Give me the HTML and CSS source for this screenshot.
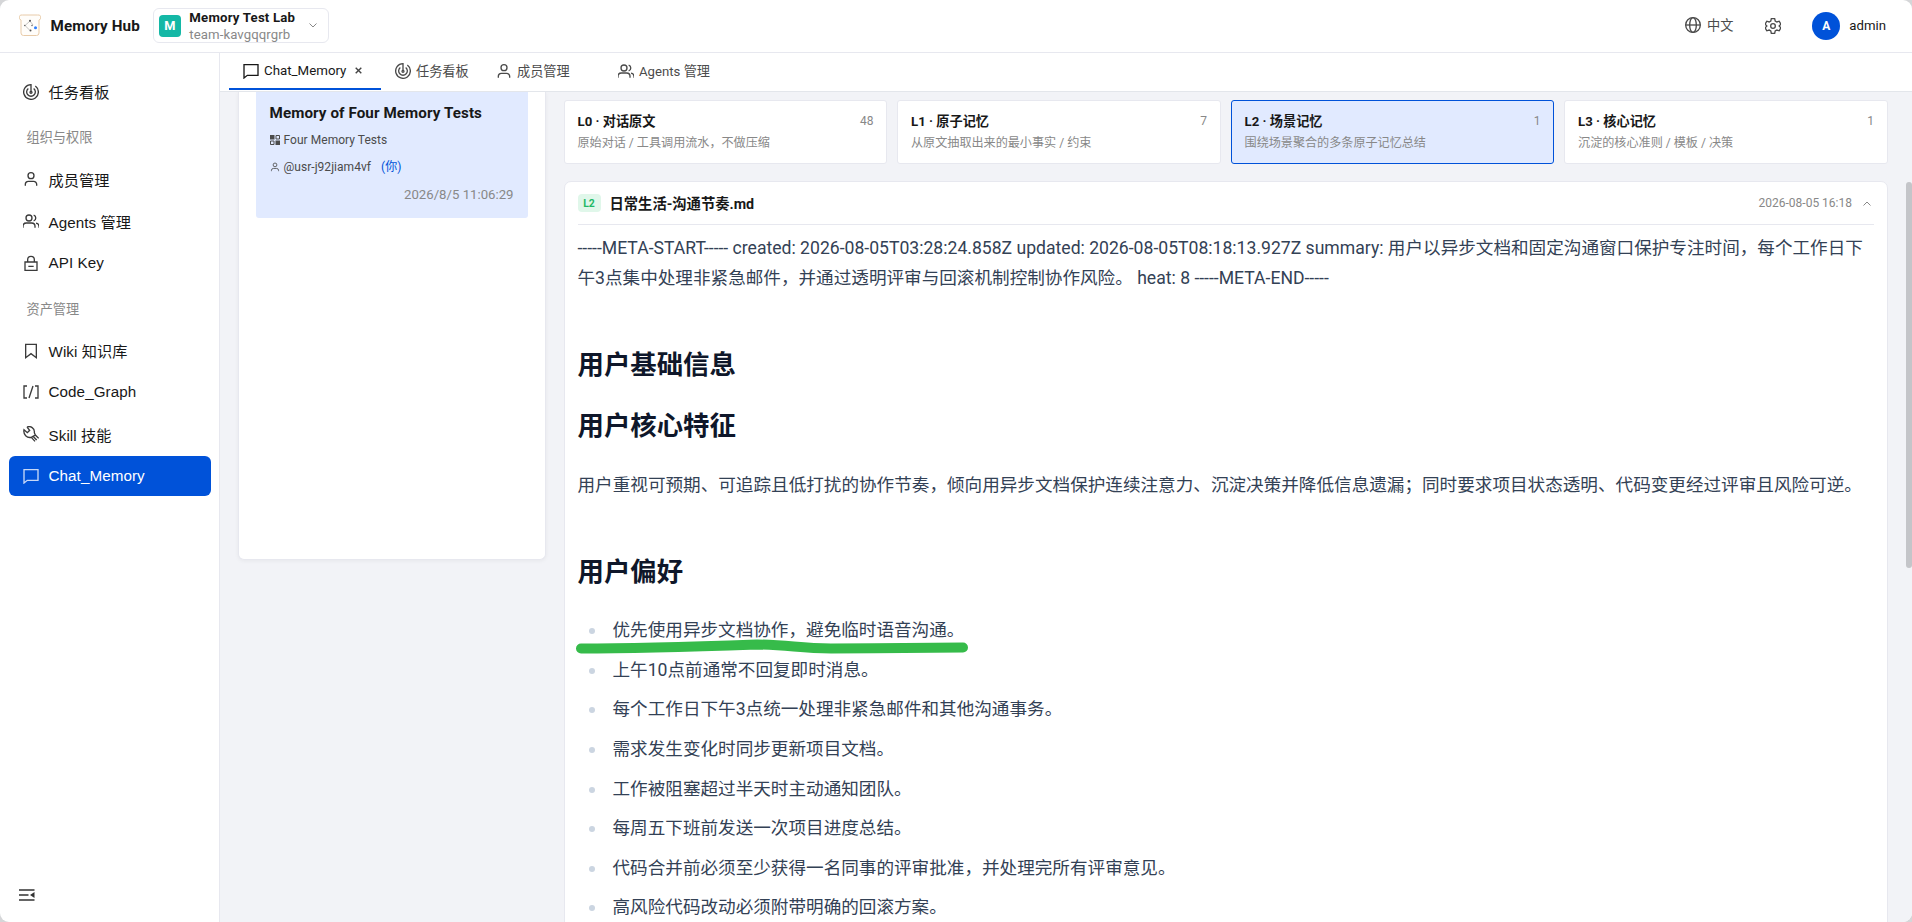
FILE: index.html
```html
<!DOCTYPE html>
<html lang="zh-CN">
<head>
    <meta charset="UTF-8">
    <meta name="viewport" content="width=device-width, initial-scale=1.0">
    <title>Memory Hub</title>
    <link rel="stylesheet" href="styles.css">
</head>
<body>

    <!-- shared icons -->
    <svg class="defs" width="0" height="0">
        <symbol id="i-board" viewBox="0 0 24 24"><path d="M12 12V1A11 11 0 1 0 18.500 3.100M8 6.700a6.500 6.500 0 1 0 8 0"/><circle cx="12" cy="12.500" r="1.500"/></symbol>
        <symbol id="i-user" viewBox="0 0 24 24"><circle cx="12" cy="7" r="4.500"/><path d="M3.500 22v-2a4.500 4.500 0 0 1 4.500-4.500h8a4.500 4.500 0 0 1 4.500 4.500v2"/></symbol>
        <symbol id="i-users" viewBox="0 0 24 24"><circle cx="9" cy="7.500" r="4.500"/><path d="M0 22v-2a5 5 0 0 1 5-5h8a5 5 0 0 1 5 5v2M16 3.200a4.500 4.500 0 0 1 0 8.600M19.500 15.200a5 5 0 0 1 4.500 4.800v2"/></symbol>
        <symbol id="i-lock" viewBox="0 0 24 24"><path d="M3 10.500h18V23H3zM7 10.500V7a5 5 0 0 1 10 0v3.500M8 17h8"/></symbol>
        <symbol id="i-mark" viewBox="0 0 24 24"><path d="M4 2h16v20l-8-6-8 6z"/></symbol>
        <symbol id="i-code" viewBox="0 0 24 24"><path d="M6 3H1.500v18H6M18 3h4.500v18H18M15 3L9 21"/></symbol>
        <symbol id="i-tool" viewBox="0 0 24 24"><path d="M6 1.500C11-.5 18 3 17 10l1.500 3.500 5 5M12.500 17C6 18.500 0 13 1.500 5.500L6.500 10 10 6.500 6 1.500M12.500 17l5.500 6M15 15.500l5.500 5.500M18.500 13.500L15 15.500 12.500 17"/></symbol>
        <symbol id="i-chat" viewBox="0 0 24 24"><path d="M1.500 2.500h21v16H6.500l-5 4z"/></symbol>
        <symbol id="i-globe" viewBox="0 0 24 24"><circle cx="12" cy="12" r="11"/><ellipse cx="12" cy="12" rx="5" ry="11"/><path d="M1 12h22"/></symbol>
        <symbol id="i-gear" viewBox="0 0 24 24"><circle cx="12" cy="12" r="3.500"/><path d="M9.500 1h5l.8 3.500 2.500 1.500 3.500-1.200 2.500 4.400-2.600 2.800 2.600 2.800-2.500 4.400-3.500-1.200-2.500 1.500-.8 3.500h-5l-.8-3.500-2.500-1.500-3.500 1.200-2.500-4.400L2.800 12 .2 9.200l2.500-4.400L6.200 6l2.500-1.500z"/></symbol>
    </svg>

    <div class="app">
        <header class="header">
            <svg class="logo" width="22" height="23" viewBox="0 0 22 23">
                <path class="logo-frame" d="M3.500 1h15a2.500 2.500 0 0 1 1.500 5v13a2.500 2.500 0 0 1-2.500 2.500h-13A2.500 2.500 0 0 1 2 19V6a2.500 2.500 0 0 1 1.500-5z"/>
                <path class="logo-line" d="M11 7l-5 4.500 5 5M11 7l3 4"/>
                <circle cx="11" cy="6.800" r="1"/><circle cx="5.800" cy="11.500" r=".7"/><circle cx="11.500" cy="16.500" r="1"/><circle cx="13" cy="11.500" r=".7"/>
                <circle class="logo-dot" cx="16.500" cy="13.800" r="1.500"/>
            </svg>
            <span class="brand">Memory Hub</span>
            <div class="team">
                <span class="team-avatar">M</span>
                <div class="team-info">
                    <div class="team-name">Memory Test Lab</div>
                    <div class="team-id">team-kavgqqrgrb</div>
                </div>
                <svg class="chevron" width="8" height="5" viewBox="0 0 8 5"><path d="M.5.500L4 4 7.500.500"/></svg>
            </div>
            <div class="header-right">
                <div class="lang"><svg class="icon"><use href="#i-globe"/></svg><span>中文</span></div>
                <svg class="icon gear"><use href="#i-gear"/></svg>
                <span class="avatar">A</span>
                <span class="username">admin</span>
            </div>
        </header>

        <div class="body">
            <nav class="sidebar">
                <a class="nav-item"><svg class="icon"><use href="#i-board"/></svg>任务看板</a>
                <div class="nav-label">组织与权限</div>
                <a class="nav-item"><svg class="icon"><use href="#i-user"/></svg>成员管理</a>
                <a class="nav-item"><svg class="icon"><use href="#i-users"/></svg>Agents 管理</a>
                <a class="nav-item"><svg class="icon"><use href="#i-lock"/></svg>API Key</a>
                <div class="nav-label">资产管理</div>
                <a class="nav-item"><svg class="icon"><use href="#i-mark"/></svg>Wiki 知识库</a>
                <a class="nav-item"><svg class="icon"><use href="#i-code"/></svg>Code_Graph</a>
                <a class="nav-item"><svg class="icon"><use href="#i-tool"/></svg>Skill 技能</a>
                <a class="nav-item active"><svg class="icon"><use href="#i-chat"/></svg>Chat_Memory</a>
                <svg class="collapse" width="16" height="12" viewBox="0 0 16 12"><path d="M0 1h15.500M0 6h9.500M0 11h15.500"/><path class="arrow" d="M15.500 3v6l-4.500-3z"/></svg>
            </nav>

            <main class="main">
                <div class="tabs">
                    <div class="tab current"><svg class="icon"><use href="#i-chat"/></svg><span>Chat_Memory</span><svg class="close" width="7" height="7" viewBox="0 0 7 7"><path d="M.7.700l5.600 5.600M6.300.700L.7 6.300"/></svg></div>
                    <div class="tab tab-board"><svg class="icon"><use href="#i-board"/></svg><span>任务看板</span></div>
                    <div class="tab tab-member"><svg class="icon"><use href="#i-user"/></svg><span>成员管理</span></div>
                    <div class="tab"><svg class="icon"><use href="#i-users"/></svg><span>Agents 管理</span></div>
                </div>

                <div class="content">
                    <section class="list-panel">
                        <div class="memory-item">
                            <div class="memory-title">Memory of Four Memory Tests</div>
                            <div class="memory-row">
                                <svg width="10" height="10" viewBox="0 0 10 10"><path class="fill" d="M0 0h4.500v4.500H0zM5.500 5.500H10V10H5.500z"/><path d="M6 .500h3.500V4H6zM.5 6H4v3.500H.5z"/></svg>
                                <span>Four Memory Tests</span>
                            </div>
                            <div class="memory-row">
                                <svg class="icon person"><use href="#i-user"/></svg>
                                <span>@usr-j92jiam4vf</span><span class="you">(你)</span>
                            </div>
                            <div class="memory-time">2026/8/5 11:06:29</div>
                        </div>
                    </section>

                    <section class="detail">
                        <div class="levels">
                            <div class="level">
                                <div class="level-head"><b>L0 · 对话原文</b><span>48</span></div>
                                <div class="level-desc">原始对话 / 工具调用流水，不做压缩</div>
                            </div>
                            <div class="level">
                                <div class="level-head"><b>L1 · 原子记忆</b><span>7</span></div>
                                <div class="level-desc">从原文抽取出来的最小事实 / 约束</div>
                            </div>
                            <div class="level selected">
                                <div class="level-head"><b>L2 · 场景记忆</b><span>1</span></div>
                                <div class="level-desc">围绕场景聚合的多条原子记忆总结</div>
                            </div>
                            <div class="level">
                                <div class="level-head"><b>L3 · 核心记忆</b><span>1</span></div>
                                <div class="level-desc">沉淀的核心准则 / 模板 / 决策</div>
                            </div>
                        </div>

                        <article class="doc">
                            <div class="doc-head">
                                <span class="badge">L2</span>
                                <span class="doc-title">日常生活-沟通节奏.md</span>
                                <span class="doc-time">2026-08-05 16:18</span>
                                <svg class="chevron" width="8" height="5" viewBox="0 0 8 5"><path d="M.5 4.500L4 1l3.500 3.500"/></svg>
                            </div>
                            <div class="prose">
                                <p>-----META-START----- created: 2026-08-05T03:28:24.858Z updated: 2026-08-05T08:18:13.927Z summary: 用户以异步文档和固定沟通窗口保护专注时间，每个工作日下午3点集中处理非紧急邮件，并通过透明评审与回滚机制控制协作风险。 heat: 8 -----META-END-----</p>
                                <h2>用户基础信息</h2>
                                <h2>用户核心特征</h2>
                                <p>用户重视可预期、可追踪且低打扰的协作节奏，倾向用异步文档保护连续注意力、沉淀决策并降低信息遗漏；同时要求项目状态透明、代码变更经过评审且风险可逆。</p>
                                <h2>用户偏好</h2>
                                <ul>
                                    <li>优先使用异步文档协作，避免临时语音沟通。<svg class="marker" width="396" height="18" viewBox="0 0 396 18"><path d="M6 11.500C50 11.500 110 10 182 7.500C215 8 225 11.500 256 11.500C300 11.500 340 10.500 388 10.500"/></svg></li>
                                    <li>上午10点前通常不回复即时消息。</li>
                                    <li>每个工作日下午3点统一处理非紧急邮件和其他沟通事务。</li>
                                    <li>需求发生变化时同步更新项目文档。</li>
                                    <li>工作被阻塞超过半天时主动通知团队。</li>
                                    <li>每周五下班前发送一次项目进度总结。</li>
                                    <li>代码合并前必须至少获得一名同事的评审批准，并处理完所有评审意见。</li>
                                    <li>高风险代码改动必须附带明确的回滚方案。</li>
                                </ul>
                            </div>
                        </article>
                    </section>
                    <div class="scroll-thumb"></div>
                </div>
            </main>
        </div>
    </div>

</body>
</html>
```
FILE: styles.css
```css
* {
    box-sizing: border-box;
}
body {
    margin: 0;
    height: 100vh;
    overflow: hidden;
    background: #d5d6d8;
    color: #181818;
    font-family: Roboto, "Noto Sans CJK SC", sans-serif;
}
svg {
    display: block;
    flex: none;
    fill: none;
    stroke: currentColor;
}
.defs {
    position: absolute;
}
.app {
    height: 100vh;
    display: flex;
    flex-direction: column;
    background: #fff;
    border-radius: 9px;
    overflow: hidden;
}
.icon {
    width: 16px;
    height: 16px;
    stroke-width: 2;
    overflow: visible;
}

/* header */
.header {
    height: 53px;
    flex: none;
    display: flex;
    align-items: center;
    padding: 0 26px 1px 19px;
    border-bottom: 1px solid #e7e8ef;
}
.logo {
    fill: #555;
    stroke: none;
}
.logo-frame {
    fill: #fffdfa;
    stroke: #e8cba9;
}
.logo-line {
    fill: none;
    stroke: #aaa;
    stroke-width: .7;
}
.logo-dot {
    fill: #2f80ff;
}
.brand {
    margin-left: 9.500px;
    font-size: 15.200px;
    font-weight: 700;
    letter-spacing: .12px;
}
.team {
    width: 176px;
    height: 35px;
    margin-left: 13px;
    padding: 0 11px 0 5px;
    display: flex;
    align-items: center;
    border: 1px solid #e7e8ef;
    border-radius: 6px;
}
.team-avatar {
    width: 22px;
    height: 22px;
    border-radius: 4px;
    background: #14b8a6;
    color: #fff;
    font-size: 12.800px;
    font-weight: 700;
    line-height: 22px;
    text-align: center;
}
.team-info {
    margin-left: 8.500px;
    line-height: 17px;
    font-size: 13.200px;
}
.team-name {
    font-weight: 700;
    letter-spacing: .2px;
}
.team-id {
    color: #888;
    letter-spacing: .08px;
}
.chevron {
    margin-left: auto;
    color: #888;
}
.header-right {
    margin-left: auto;
    display: flex;
    align-items: center;
    font-size: 13.200px;
}
.lang {
    display: flex;
    align-items: center;
    gap: 6px;
    margin-top: -2px;
    color: #4b4b4b;
}
.gear {
    margin-left: 32px;
    color: #4b4b4b;
}
.avatar {
    width: 28px;
    height: 28px;
    margin: 0 9px 0 31px;
    border-radius: 50%;
    background: #0052d9;
    color: #fff;
    font-size: 12px;
    font-weight: 700;
    line-height: 28px;
    text-align: center;
}

/* sidebar */
.body {
    flex: 1;
    min-height: 0;
    display: flex;
}
.sidebar {
    width: 220px;
    flex: none;
    display: flex;
    flex-direction: column;
    padding: 18.500px 9px 21px;
    border-right: 1px solid #e7e8ef;
    font-family: "Liberation Sans", "Noto Sans CJK SC", sans-serif;
}
.nav-item {
    height: 40px;
    margin-bottom: 1.800px;
    padding: 0 0 1px 13.500px;
    display: flex;
    align-items: center;
    gap: 10px;
    border-radius: 6px;
    font-size: 15.200px;
    letter-spacing: .08px;
}
.nav-item .icon {
    margin-top: 1px;
    color: #3b3b3b;
}
.nav-item.active {
    width: 202px;
    background: #0052d9;
    color: #fff;
}
.nav-item.active .icon {
    color: #c8d8f7;
}
.nav-label {
    height: 46px;
    padding: 3px 0 0 17.500px;
    font-size: 13.200px;
    line-height: 43px;
    color: #888;
}
.collapse {
    margin: auto 0 0 10px;
    color: #333;
    stroke-width: 1.600;
}
.collapse .arrow {
    fill: currentColor;
    stroke: none;
}

/* tabs */
.main {
    flex: 1;
    min-width: 0;
    display: flex;
    flex-direction: column;
}
.tabs {
    height: 39px;
    flex: none;
    display: flex;
    padding-left: 9px;
    border-bottom: 1px solid #e3e6eb;
    font-size: 13.200px;
    white-space: nowrap;
}
.tab {
    height: 37px;
    padding: 0 13px 2px 14px;
    display: flex;
    align-items: center;
    gap: 5px;
    color: #4b4b4b;
}
.tab.current {
    width: 152px;
    padding-bottom: 0;
    border-bottom: 2px solid #0052d9;
    color: #181818;
}
.tab.current span {
    font-size: 13.300px;
}
.close {
    margin-left: 4px;
    color: #444;
    stroke-width: 1.400;
}
.tab-board {
    width: 101px;
}
.tab-member {
    width: 122px;
}

/* content */
.content {
    flex: 1;
    min-height: 0;
    position: relative;
    display: flex;
    align-items: flex-start;
    gap: 18px;
    padding: 0 24px 0 18px;
    background: #f2f3f7;
    overflow: hidden;
}
.list-panel {
    width: 307.500px;
    height: 468px;
    flex: none;
    padding: 0 17px;
    background: #fff;
    border: 1px solid #e7e8ef;
    border-top: 0;
    border-radius: 0 0 6px 6px;
    box-shadow: 0 1px 4px rgba(0, 0, 0, .05);
}
.memory-item {
    height: 126px;
    padding: 9px 14px 0 13.500px;
    background: #e1eaff;
    border-radius: 0 0 3px 3px;
}
.memory-title {
    font-size: 15.200px;
    font-weight: 700;
    letter-spacing: .08px;
    line-height: 24px;
}
.memory-row {
    display: flex;
    align-items: center;
    gap: 4px;
    height: 20px;
    margin-top: 5px;
    font-size: 12px;
    letter-spacing: .04px;
    color: #4b4b4b;
}
.memory-row + .memory-row {
    margin-top: 6.500px;
}
.memory-row .fill {
    fill: currentColor;
    stroke: none;
}
.memory-row .person {
    width: 10px;
    height: 10px;
}
.you {
    margin: -2px 0 0 6px;
    color: #0052d9;
}
.memory-time {
    margin-top: 8px;
    font-size: 13.200px;
    line-height: 20px;
    text-align: right;
    color: #888;
}
.detail {
    flex: 1;
    min-width: 0;
    padding-top: 8px;
}
.levels {
    display: grid;
    grid-template-columns: repeat(4, 1fr);
    gap: 9.600px;
}
.level {
    height: 64px;
    padding: 10px 13px;
    background: #fff;
    border: 1px solid #e7e8ef;
    border-radius: 3px;
}
.level.selected {
    background: #e1eaff;
    border-color: #0052d9;
}
.level-head {
    display: flex;
    justify-content: space-between;
    font-size: 13.200px;
    line-height: 21px;
}
.level-head span {
    font-size: 12px;
    color: #888;
}
.level-desc {
    font-size: 12.100px;
    line-height: 22px;
    color: #888;
}
.doc {
    margin-top: 17px;
    padding: 0 13px;
    background: #fff;
    border: 1px solid #e7e8ef;
    border-radius: 7px;
}
.doc-head {
    height: 43px;
    display: flex;
    align-items: center;
    border-bottom: 1px solid #e7e8ef;
}
.badge {
    width: 23px;
    height: 18px;
    border-radius: 4px;
    background: #e0f7ea;
    color: #22b966;
    font-size: 10.400px;
    font-weight: 700;
    line-height: 19px;
    text-align: center;
}
.doc-title {
    margin: -2px 0 0 9px;
    font-size: 14.300px;
    font-weight: 700;
}
.doc-time {
    margin-left: auto;
    font-size: 12px;
    color: #888;
}
.doc-head .chevron {
    margin: 0 3px 0 11px;
}

/* markdown body */
.prose {
    padding-top: 7.500px;
    font-size: 17.600px;
    line-height: 1.75;
    color: #334155;
}
.prose p {
    margin: 0;
}
.prose h2 {
    position: relative;
    top: 1px;
    margin: 52.800px 0 26.400px;
    font-size: 26.400px;
    line-height: 35.200px;
    color: #0f172a;
}
.prose h2 + h2 {
    margin-top: 0;
}
.prose ul {
    margin: 0;
    padding: 0;
    list-style: none;
}
.prose li {
    position: relative;
    margin-bottom: 8.800px;
    padding-left: 35px;
}
.prose li::before {
    content: "";
    position: absolute;
    left: 11px;
    top: 13px;
    width: 6px;
    height: 6px;
    border-radius: 50%;
    background: #cbd5e1;
}
/* highlighter stroke under the line */
.marker {
    position: absolute;
    left: -3px;
    top: 21.500px;
    stroke: #36bb4a;
    stroke-width: 10;
    stroke-linecap: round;
}
.scroll-thumb {
    position: absolute;
    right: 0;
    top: 90px;
    width: 6px;
    height: 386px;
    border-radius: 3px;
    background: #c4c5c9;
}
```
